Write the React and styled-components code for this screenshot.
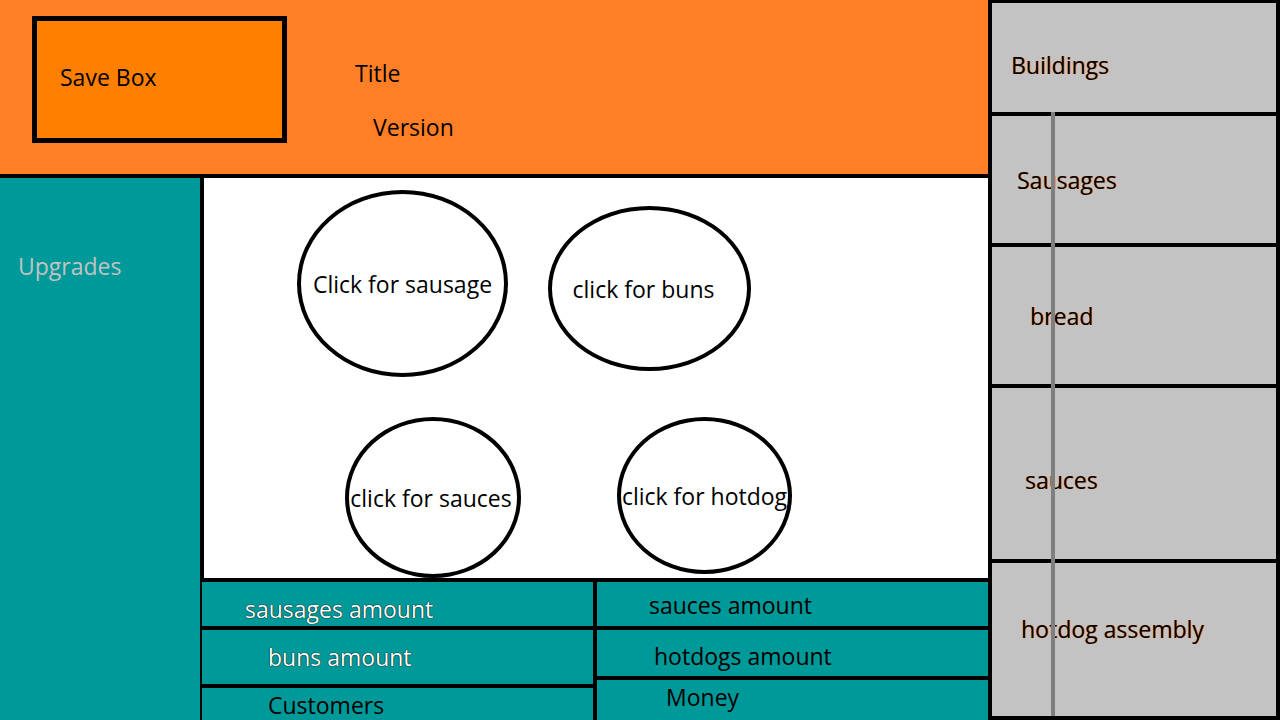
import styled, {createGlobalStyle} from 'styled-components';

const GlobalStyle = createGlobalStyle`
    html, body {
        margin: 0;
        padding: 0;
        width: 1280px;
        height: 720px;
        overflow: hidden;
        font-family: "Open Sans", "Noto Sans", sans-serif;
    }
`;

const Page = styled.div`
    display: grid;
    grid-template-columns: 988px 292px;
    width: 1280px;
    height: 720px;
    background: #fff;
    font-size: 23px;
`;

const LeftArea = styled.div`
    display: grid;
    grid-template-rows: 178px 1fr;
    min-height: 0;
`;

const Header = styled.header`
    display: flex;
    align-items: flex-start;
    background: #ff7f27;
    border-bottom: 4px solid #000;
`;

const SaveBox = styled.div`
    display: flex;
    align-items: center;
    box-sizing: border-box;
    width: 255px;
    height: 127px;
    margin: 16px 0 0 32px;
    padding: 0 0 6px 23px;
    background: #ff7f00;
    border: 5px solid #000;
    color: #000;
`;

const TitleBlock = styled.div`
    display: flex;
    flex-direction: column;
    margin: 58px 0 0 68px;
    color: #000;
`;

const HeaderText = styled.div`
    margin-left: ${p => p.indent || 0}px;
    margin-top: ${p => p.gap || 0}px;
    line-height: 30px;
`;

const Body = styled.div`
    display: grid;
    grid-template-columns: 200px 1fr;
    min-height: 0;
`;

const Sidebar = styled.aside`
    background: #009999;
    padding: 72px 0 0 18px;
    color: #c3c3c3;
`;

const Main = styled.main`
    display: grid;
    grid-template-rows: 400px 1fr;
    min-height: 0;
`;

const Canvas = styled.section`
    display: flex;
    flex-direction: column;
    background: #fff;
    border-left: 4px solid #000;
`;

const CircleRow = styled.div`
    display: flex;
    align-items: flex-start;
    margin-top: ${p => p.top}px;
`;

const Circle = styled.button`
    display: flex;
    align-items: center;
    justify-content: center;
    box-sizing: border-box;
    width: ${p => p.w}px;
    height: ${p => p.h}px;
    margin-left: ${p => p.left}px;
    margin-top: ${p => p.top || 0}px;
    padding: 0 ${p => p.pull || 0}px 0 0;
    border: 4px solid #000;
    border-radius: 50%;
    background: #fff;
    color: #000;
    font-family: inherit;
    font-size: 23px;
    cursor: pointer;
    white-space: nowrap;
`;

const Stats = styled.section`
    display: grid;
    grid-template-columns: 393px 1fr;
    background: #009999;
    border-top: 4px solid #000;
    min-height: 0;
    overflow: hidden;
`;

const StatColumn = styled.div`
    display: flex;
    flex-direction: column;
    border-left: 4px solid #000;
    margin-left: ${p => p.shift || 0}px;
`;

const StatRow = styled.div`
    display: flex;
    align-items: center;
    box-sizing: border-box;
    height: ${p => p.h ? `${p.h}px` : 'auto'};
    flex: ${p => p.h ? 'none' : 1};
    padding: ${p => p.nudge > 0 ? p.nudge : 0}px 0 ${p => p.nudge < 0 ? -p.nudge : 0}px ${p => p.indent}px;
    border-bottom: ${p => p.last ? 'none' : '4px solid #000'};
    color: ${p => p.light ? '#fff' : '#000'};
    text-shadow: ${p => p.light ? '0 0 1px #000, 0 0 1px #000' : 'none'};
    white-space: nowrap;
`;

const Buildings = styled.aside`
    position: relative;
    display: flex;
    flex-direction: column;
    background: #c3c3c3;
    border: 4px solid #000;
    border-top-width: 3px;
`;

const Building = styled.div`
    display: flex;
    align-items: center;
    box-sizing: border-box;
    height: ${p => p.h}px;
    padding: ${p => p.nudge > 0 ? p.nudge : 0}px 0 ${p => p.nudge < 0 ? -p.nudge : 0}px ${p => p.indent}px;
    border-bottom: ${p => p.last ? 'none' : '4px solid #000'};
    color: #000;
    text-shadow: 1px 0 0 #ff7f27;
`;

const Divider = styled.div`
    position: absolute;
    left: 59px;
    top: 109px;
    bottom: 0;
    width: 4px;
    background: #7f7f7f;
`;

function App() {
  const buildings = [
    {name: 'Buildings', h: 113, indent: 19, nudge: 15},
    {name: 'Sausages', h: 131, indent: 25, nudge: 0},
    {name: 'bread', h: 141, indent: 38, nudge: 0},
    {name: 'sauces', h: 175, indent: 33, nudge: 13},
    {name: 'hotdog assembly', h: 153, indent: 29, nudge: -21},
  ];

  return (
    <>
      <GlobalStyle />
      <Page>
        <LeftArea>
          <Header>
            <SaveBox>Save Box</SaveBox>
            <TitleBlock>
              <HeaderText>Title</HeaderText>
              <HeaderText indent={18} gap={24}>Version</HeaderText>
            </TitleBlock>
          </Header>
          <Body>
            <Sidebar>Upgrades</Sidebar>
            <Main>
              <Canvas>
                <CircleRow top={12}>
                  <Circle w={211} h={187} left={93}>Click for sausage</Circle>
                  <Circle w={203} h={165} left={40} top={16} pull={12}>click for buns</Circle>
                </CircleRow>
                <CircleRow top={40}>
                  <Circle w={176} h={161} left={141} pull={4}>click for sauces</Circle>
                  <Circle w={175} h={157} left={96}>click for hotdog</Circle>
                </CircleRow>
              </Canvas>
              <Stats>
                <StatColumn shift={-2}>
                  <StatRow h={48} indent={43} nudge={10} light>sausages amount</StatRow>
                  <StatRow h={58} indent={66} light>buns amount</StatRow>
                  <StatRow indent={66} nudge={1} last>Customers</StatRow>
                </StatColumn>
                <StatColumn>
                  <StatRow h={48} indent={52} nudge={2}>sauces amount</StatRow>
                  <StatRow h={50} indent={57} nudge={6}>hotdogs amount</StatRow>
                  <StatRow indent={69} nudge={-8} last>Money</StatRow>
                </StatColumn>
              </Stats>
            </Main>
          </Body>
        </LeftArea>
        <Buildings>
          {buildings.map((b, i) => (
            <Building key={b.name} h={b.h} indent={b.indent} nudge={b.nudge} last={i === buildings.length - 1}>
              {b.name}
            </Building>
          ))}
          <Divider />
        </Buildings>
      </Page>
    </>
  );
}

export default App;
